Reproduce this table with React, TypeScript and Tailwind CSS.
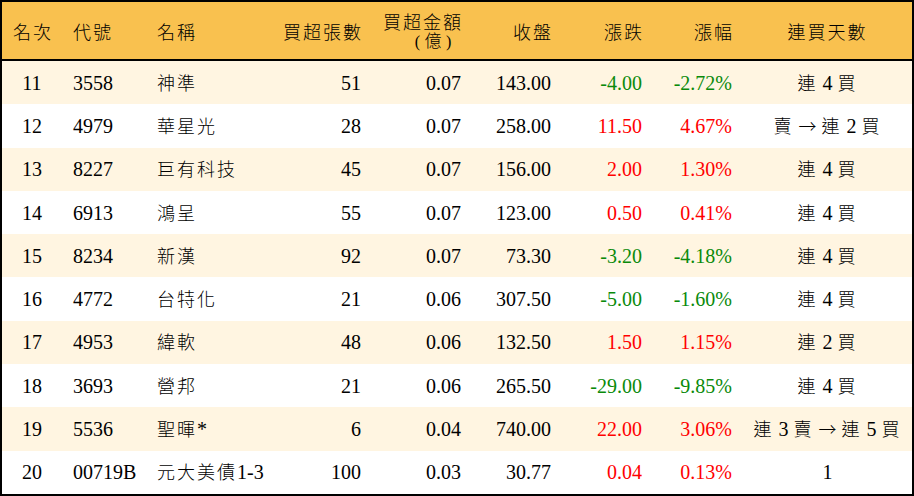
import React from "react";

type Row = {
  rank: string;
  code: string;
  name: string;
  vol: string;
  amt: string;
  close: string;
  chg: string;
  pct: string;
  days: string;
};

const rows: Row[] = [
  { rank: "11", code: "3558", name: "神準", vol: "51", amt: "0.07", close: "143.00", chg: "-4.00", pct: "-2.72%", days: "連 4 買" },
  { rank: "12", code: "4979", name: "華星光", vol: "28", amt: "0.07", close: "258.00", chg: "11.50", pct: "4.67%", days: "賣 → 連 2 買" },
  { rank: "13", code: "8227", name: "巨有科技", vol: "45", amt: "0.07", close: "156.00", chg: "2.00", pct: "1.30%", days: "連 4 買" },
  { rank: "14", code: "6913", name: "鴻呈", vol: "55", amt: "0.07", close: "123.00", chg: "0.50", pct: "0.41%", days: "連 4 買" },
  { rank: "15", code: "8234", name: "新漢", vol: "92", amt: "0.07", close: "73.30", chg: "-3.20", pct: "-4.18%", days: "連 4 買" },
  { rank: "16", code: "4772", name: "台特化", vol: "21", amt: "0.06", close: "307.50", chg: "-5.00", pct: "-1.60%", days: "連 4 買" },
  { rank: "17", code: "4953", name: "緯軟", vol: "48", amt: "0.06", close: "132.50", chg: "1.50", pct: "1.15%", days: "連 2 買" },
  { rank: "18", code: "3693", name: "營邦", vol: "21", amt: "0.06", close: "265.50", chg: "-29.00", pct: "-9.85%", days: "連 4 買" },
  { rank: "19", code: "5536", name: "聖暉*", vol: "6", amt: "0.04", close: "740.00", chg: "22.00", pct: "3.06%", days: "連 3 賣 → 連 5 買" },
  { rank: "20", code: "00719B", name: "元大美債1-3", vol: "100", amt: "0.03", close: "30.77", chg: "0.04", pct: "0.13%", days: "1" },
];

const cjkRe = /([\u3000-\u9fff\uff00-\uffef→]+)/;

function T({ s }: { s: string }) {
  const parts = s.split(cjkRe).filter((p) => p !== "");
  return (
    <>
      {parts.map((p, i) =>
        cjkRe.test(p) ? (
          p === "→" ? (
            <span key={i} className="text-[18px] font-light" style={{ fontFamily: '"Noto Sans CJK JP", sans-serif' }}>
              {p}
            </span>
          ) : (
            <span key={i} className="text-[18px] tracking-[2px] font-light">
              {p}
            </span>
          )
        ) : (
          <span key={i}>{p}</span>
        )
      )}
    </>
  );
}

function Cells({ r, odd }: { r: Row; odd: boolean }) {
  const neg = r.chg.startsWith("-");
  const c = neg ? "text-[#0a8a0a]" : "text-[#ff0000]";
  return (
    <div className={`flex flex-1 items-center ${odd ? "bg-[#fff5e1]" : "bg-white"}`}>
      <div className="w-[60px] text-center">{r.rank}</div>
      <div className="w-[83px] pl-[11px]">{r.code}</div>
      <div className="w-[105px] pl-[12px] whitespace-nowrap">
        <T s={r.name} />
      </div>
      <div className="w-[122px] pr-[11px] text-right">{r.vol}</div>
      <div className="w-[100px] pr-[11px] text-right">{r.amt}</div>
      <div className="w-[90px] pr-[11px] text-right">{r.close}</div>
      <div className={`w-[91px] pr-[11px] text-right ${c}`}>{r.chg}</div>
      <div className={`w-[90px] pr-[11px] text-right ${c}`}>{r.pct}</div>
      <div className="flex-1 text-center whitespace-nowrap">
        <T s={r.days} />
      </div>
    </div>
  );
}

export default function App() {
  return (
    <div
      className="w-[914px] h-[496px] border-2 border-black flex flex-col text-[20px] text-black bg-white"
      style={{ fontFamily: '"Liberation Serif", "Noto Sans CJK TC", serif' }}
    >
      <div className="h-[59px] shrink-0 flex items-center bg-[#f9c14f] border-b-2 border-black pt-[2px]">
        <div className="w-[60px] text-center pl-[2px]">
          <T s="名次" />
        </div>
        <div className="w-[83px] pl-[11px]">
          <T s="代號" />
        </div>
        <div className="w-[105px] pl-[12px]">
          <T s="名稱" />
        </div>
        <div className="w-[122px] pr-[9px] text-right">
          <T s="買超張數" />
        </div>
        <div className="w-[100px] pr-[9px] flex flex-col items-end">
          <div className="leading-[19px] h-[19px]">
            <T s="買超金額" />
          </div>
          <div className="leading-[17px] h-[17px] mt-[1px] flex text-[16px] font-light">
            <span className="w-[20px] text-right pr-[3px]">(</span>
            <span className="w-[20px] text-center text-[17px]">億</span>
            <span className="w-[20px] text-left pl-[3px]">)</span>
          </div>
        </div>
        <div className="w-[90px] pr-[9px] text-right">
          <T s="收盤" />
        </div>
        <div className="w-[91px] pr-[9px] text-right">
          <T s="漲跌" />
        </div>
        <div className="w-[90px] pr-[9px] text-right">
          <T s="漲幅" />
        </div>
        <div className="flex-1 text-center">
          <T s="連買天數" />
        </div>
      </div>
      <div className="flex-1 flex flex-col">
        {rows.map((r, i) => (
          <Cells key={r.rank} r={r} odd={i % 2 === 0} />
        ))}
      </div>
    </div>
  );
}
